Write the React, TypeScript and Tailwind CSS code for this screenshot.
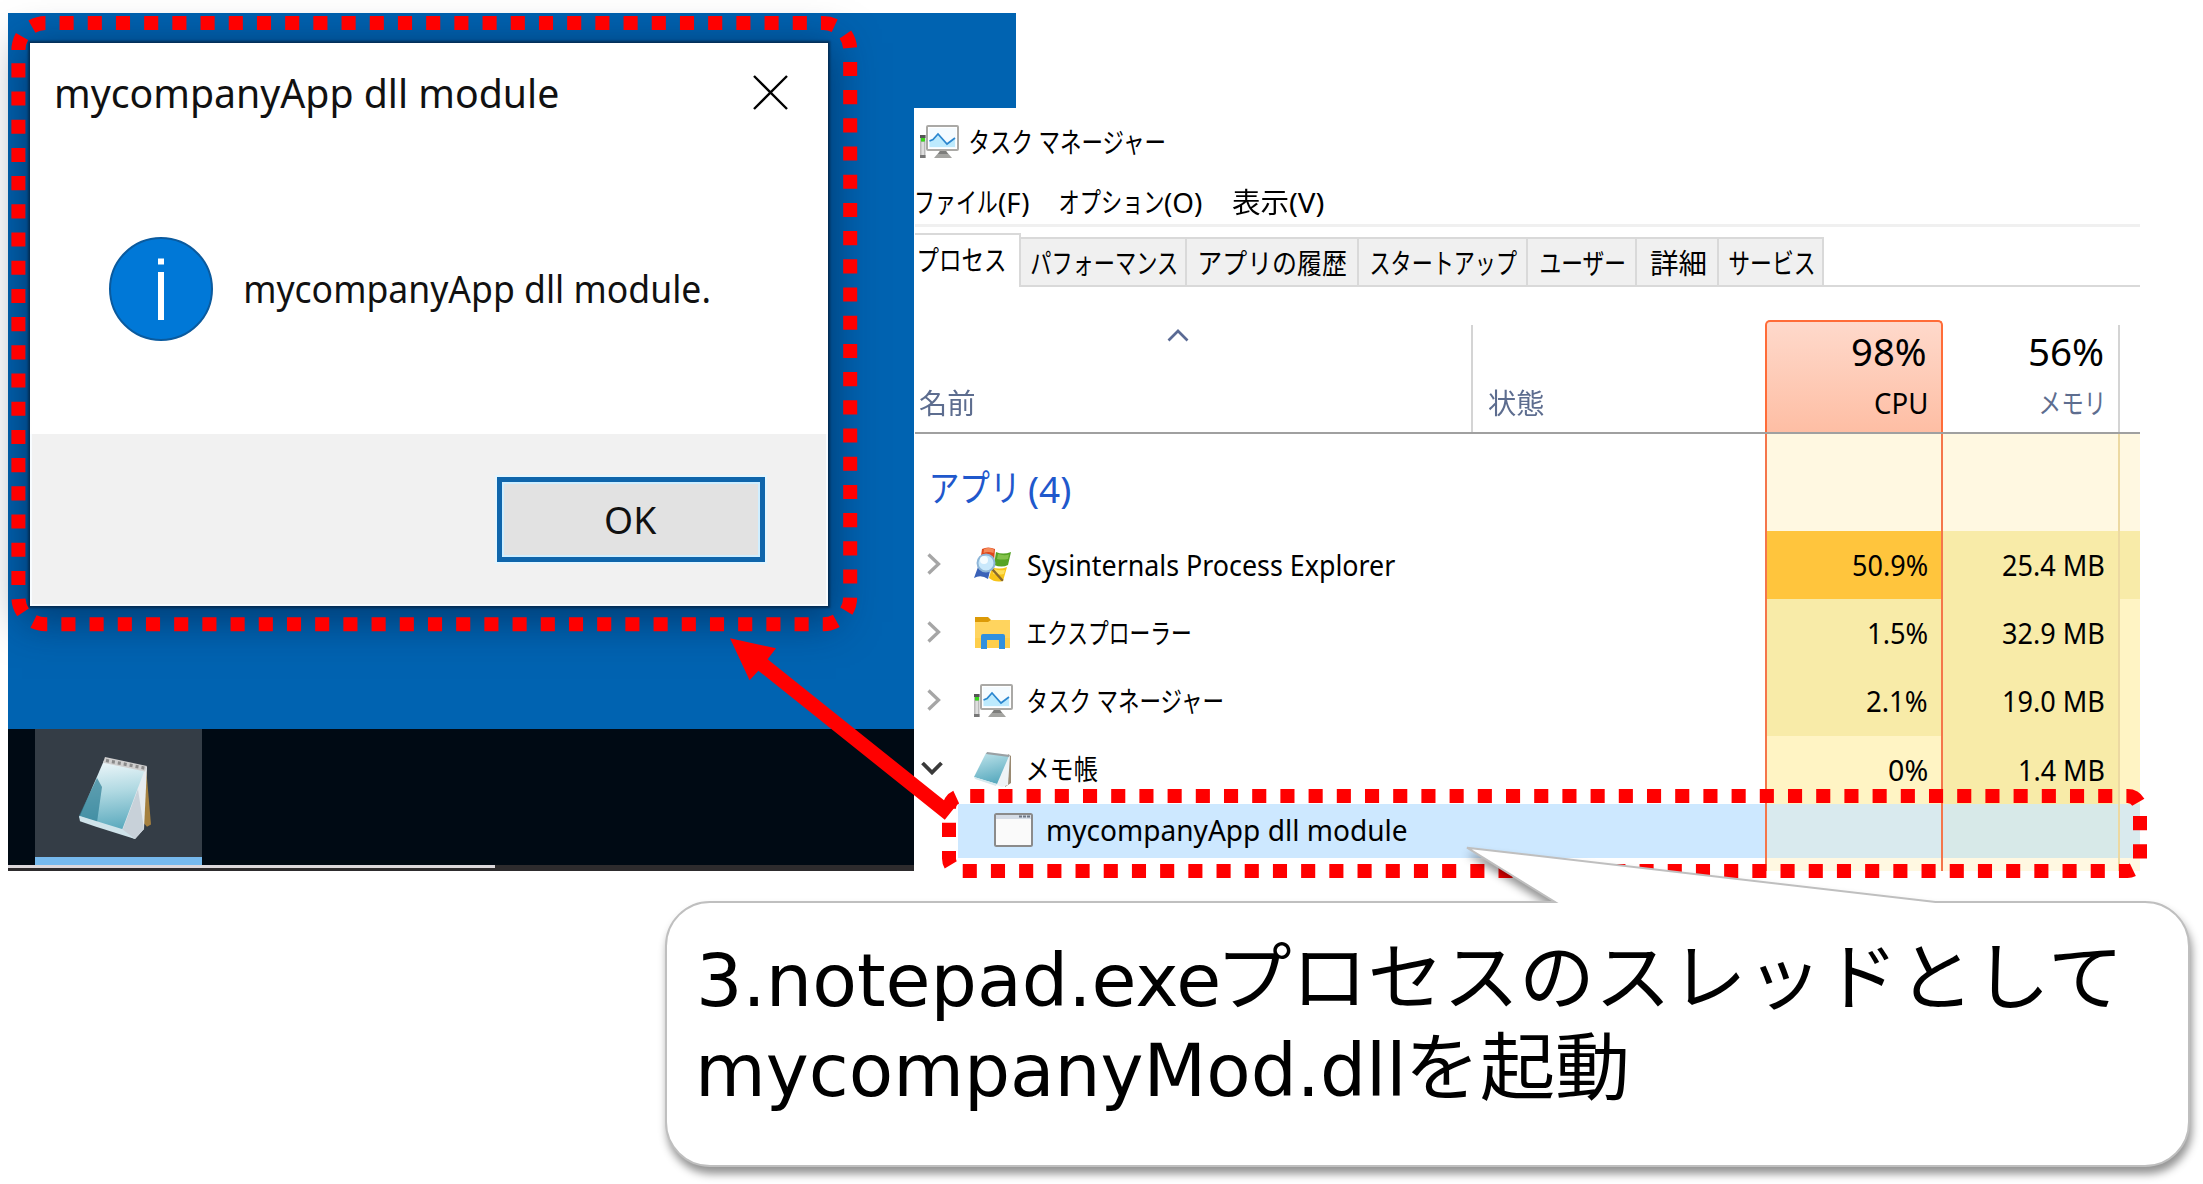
import { useLayoutEffect, useRef, useState } from "react";
import type { ReactNode } from "react";

/* One line of text whose inked width is stretched or condensed to `w` pixels. */
function Fit({ w, children, className = "" }: { w: number; children: string; className?: string }) {
  const ref = useRef<HTMLSpanElement>(null);
  const [fit, setFit] = useState({ shift: 0, scale: 1 });
  useLayoutEffect(() => {
    const el = ref.current;
    const ctx = document.createElement("canvas").getContext("2d");
    if (!el || !ctx) return;
    const cs = getComputedStyle(el);
    ctx.font = `${cs.fontWeight} ${cs.fontSize} ${cs.fontFamily}`;
    const m = ctx.measureText(children);
    const scale = w / (m.actualBoundingBoxRight + m.actualBoundingBoxLeft);
    setFit({ shift: m.actualBoundingBoxLeft * scale, scale });
  }, [w, children]);
  return (
    <span className={`block shrink-0 whitespace-nowrap ${className}`} style={{ width: w }}>
      <span
        ref={ref}
        className="inline-block origin-left"
        style={{ transform: `translateX(${fit.shift}px) scaleX(${fit.scale})` }}
      >
        {children}
      </span>
    </span>
  );
}

function TaskManagerIcon() {
  return (
    <svg width="39" height="34" viewBox="0 0 39 34" className="shrink-0">
      <rect x="0" y="10" width="5.5" height="23" fill="#b9b9b9" />
      <rect x="0" y="10" width="5.5" height="3" fill="#555" />
      <rect x="1" y="13" width="4" height="3.5" fill="#38d61c" />
      <rect x="1.5" y="17" width="2.5" height="13" fill="#dedede" />
      <rect x="0" y="30" width="5.5" height="3" fill="#777" />
      <rect x="7" y="1" width="31" height="24" rx="1" fill="#fff" stroke="#aaa9a6" strokeWidth="2" />
      <rect x="9" y="3" width="27" height="20" fill="#f4fbff" />
      <path d="M9.500 16 13 14.500 18 9 27 19 35 13V22H9.500Z" fill="#bdeafd" />
      <path d="M9.500 16 13 14.500 18 9 27 19 35 13" fill="none" stroke="#2b86cf" strokeWidth="1.700" />
      <path d="M20 26h6l6 7H14Z" fill="#a3a3a0" />
      <path d="M20 26h6l2 3h-10Z" fill="#7d7d7b" />
    </svg>
  );
}

function ProcessExplorerIcon() {
  return (
    <svg width="38" height="36" viewBox="0 0 38 36" className="shrink-0">
      <path d="M8 2Q14-1 21 2L20 15Q13 12 6 16Z" fill="#e0481b" />
      <path d="M10 2Q15 0 20 2.500L19.500 6Q14 4 9.500 6Z" fill="#f58a5a" />
      <path d="M22 5Q29 8 37 5L34 18Q28 21 20 18Z" fill="#55a324" />
      <path d="M24 7Q30 9 35 7.500L34 12Q28 13 23 12Z" fill="#83c14a" />
      <path d="M4 20Q11 16 17 20L14 32Q7 27 0 31Z" fill="#3a62b8" />
      <path d="M18 20Q25 23 33 20L29 34Q21 36 15 31Z" fill="#f7c419" />
      <path d="M20 22Q25 24 31 23L30 27Q25 28 19 27Z" fill="#ffe05a" />
      <path d="m19 23 9 10" stroke="#8a6a2a" strokeWidth="2.500" strokeLinecap="round" />
      <circle cx="12" cy="16" r="8.500" fill="#c9e8fb" stroke="#8fb6d8" strokeWidth="2" />
      <circle cx="10" cy="13" r="4" fill="#f5fcff" />
    </svg>
  );
}

function FolderIcon() {
  return (
    <svg width="38" height="34" viewBox="0 0 38 34" className="shrink-0">
      <path d="M1 1h13l3 3v4H1Z" fill="#dc9a07" />
      <path d="M1 6h13l3-2h19v28H1Z" fill="#ffd45e" />
      <path d="M1 22h35v10H1Z" fill="#fdc93f" opacity=".6" />
      <path d="M7 33V20q0-2 2-2h20q2 0 2 2v13h-6v-9H13v9Z" fill="#3190df" />
    </svg>
  );
}

/* Desktop-size notepad: lid opened over the white pages. */
function NotepadLarge() {
  return (
    <svg width="74" height="84" viewBox="0 0 74 76" className="shrink-0" preserveAspectRatio="none">
      <defs>
        <linearGradient id="pad-lg" x1=".4" y1="0" x2=".5" y2="1">
          <stop offset="0" stopColor="#eef7fa" />
          <stop offset=".45" stopColor="#b0d9e2" />
          <stop offset="1" stopColor="#5aa9bd" />
        </linearGradient>
      </defs>
      <path d="M68 10 73 62l-4 2-6-6Z" fill="#a5803f" />
      <path d="M27 2 69 10 66 66 57 75 42 69Z" fill="#e6ebef" />
      <path d="M60 30 66 66 57 75 44 68Z" fill="#c8d1d9" />
      <path d="M26 4 67 12 44 67 1 56Z" fill="url(#pad-lg)" />
      <path d="M19 20 24 28 19 60 1 54Z" fill="#2f7f95" opacity=".7" />
      <path d="M1 54 44 66l13 9-39-11-16-5Z" fill="#cfe3ea" />
      <path d="M27 1 69 9 67 14 25 6Z" fill="#cfcfcf" />
      <path d="M28 4 67 11" stroke="#8a8a8a" strokeWidth="3" strokeDasharray="3 3" />
    </svg>
  );
}

function NotepadIcon() {
  return (
    <svg width="38" height="37" viewBox="0 0 38 37" className="shrink-0">
      <defs>
        <linearGradient id="pad-sm" x1=".3" y1="0" x2=".6" y2="1">
          <stop offset="0" stopColor="#b9e0e8" />
          <stop offset="1" stopColor="#55a8bd" />
        </linearGradient>
      </defs>
      <path d="M34 3 37 5 37 32 31 36Z" fill="#9a8a72" />
      <path d="M13 1 36 4 34 34 28 36 20 33Z" fill="#eef3f6" />
      <path d="M12 2 35 5 23 33 0 26Z" fill="url(#pad-sm)" />
      <path d="M0 26 23 33 22 35 1 28Z" fill="#d6e9ee" />
      <path d="M13 1 36 4 35 6 12 3Z" fill="#9aa0a3" />
    </svg>
  );
}

function WindowIcon() {
  return (
    <svg width="39" height="34" viewBox="0 0 39 34" className="shrink-0">
      <rect x="1" y="1" width="37" height="32" rx="1.500" fill="#fafafa" stroke="#8b8b8b" strokeWidth="2" />
      <rect x="2" y="2" width="35" height="4" fill="#d5dce6" />
      <path d="M25 3.500h3m1 0h3m1 0h3" stroke="#6f7784" strokeWidth="2" />
    </svg>
  );
}

function ChevronRight() {
  return (
    <svg width="14" height="22" viewBox="0 0 14 22" className="mb-[3px] shrink-0">
      <path d="M1.500 1.500 11.500 11 1.500 20.500" fill="none" stroke="#a6a6a6" strokeWidth="3.300" />
    </svg>
  );
}

function ChevronDown() {
  return (
    <svg width="22" height="14" viewBox="0 0 22 14" className="-ml-1.5 mb-[4px] shrink-0">
      <path d="M1.500 2 11 11.500 20.500 2" fill="none" stroke="#3a3a3a" strokeWidth="3.800" />
    </svg>
  );
}

function Desktop() {
  return (
    <div className="absolute left-[8px] top-[13px] flex h-[858px] w-[1008px] flex-col overflow-hidden bg-[#0063b1]">
      <div className="flex-1" />
      <div className="flex h-[136px] bg-[#000a14] pl-[27px]">
        <div className="flex w-[167px] flex-col border-b-[8px] border-[#76b9ed] bg-[#343d46]">
          <div className="pl-[43px] pt-[27px]">
            <NotepadLarge />
          </div>
        </div>
      </div>
      <div className="h-[6px] bg-[#2d2b2d]">
        <div className="h-[3px] w-[487px] bg-[#dcd8dc]" />
      </div>
    </div>
  );
}

function MessageDialog() {
  return (
    <div className="absolute left-[30px] top-[43px] flex h-[563px] w-[798px] flex-col bg-white text-[#111] shadow-[0_0_2px_2px_rgba(5,40,75,0.85),0_8px_38px_8px_rgba(0,25,60,0.5)]">
      <div className="flex h-[100px] items-center justify-between pb-[2px] pl-[27px] pr-[40px]">
        <Fit w={501} className="pt-[2px] text-[39.5px] leading-[50px]">mycompanyApp dll module</Fit>
        <svg width="35" height="35" viewBox="0 0 35 35">
          <path d="M1 1 34 34M34 1 1 34" stroke="#000" strokeWidth="2.400" />
        </svg>
      </div>
      <div className="flex h-[291px] items-center gap-[33px] pl-[79px]">
        <svg width="104" height="104" viewBox="0 0 104 104">
          <circle cx="52" cy="52" r="51" fill="#0078d7" stroke="#0a5a9e" strokeWidth="2" />
          <rect x="49" y="21.500" width="6" height="6" fill="#fff" />
          <rect x="49" y="35" width="6" height="48" fill="#fff" />
        </svg>
        <Fit w={463} className="text-[37.5px] leading-[50px]">mycompanyApp dll module.</Fit>
      </div>
      <div className="flex flex-1 items-center justify-end border-2 border-t-0 border-[#f8fcff] bg-[#f1f1f1] pr-[61px]">
        <div className="flex h-[85px] w-[268px] items-center justify-center border-[5px] border-[#0f65ab] bg-[#e2e2e2] pt-[2px] shadow-[0_0_0_2px_#e4f6ff,inset_0_0_0_2px_#cfeeff]">
          <Fit w={51} className="text-[37.5px] leading-[50px]">OK</Fit>
        </div>
      </div>
    </div>
  );
}

function Tab({ w, width, label }: { w: string; width: number; label: string }) {
  return (
    <div className={`flex h-[50px] items-center justify-center border-y-2 border-r-2 border-[#d9d9d9] bg-[#f0f0f0] pl-[2px] pt-0.5 ${w}`}>
      <Fit w={width}>{label}</Fit>
    </div>
  );
}

type Row = { icon: ReactNode; name: string; nameW: number; cpu: string; cpuW: number; cpuBg: string; mem: string; memW: number; restBg: string; open?: boolean };

const rows: Row[] = [
  { icon: <ProcessExplorerIcon />, name: "Sysinternals Process Explorer", nameW: 367.5, cpu: "50.9%", cpuW: 74.5, cpuBg: "bg-[#ffc53d]", mem: "25.4 MB", memW: 100.5, restBg: "bg-[#f8eba8]" },
  { icon: <FolderIcon />, name: "エクスプローラー", nameW: 162.5, cpu: "1.5%", cpuW: 58.5, cpuBg: "bg-[#f8eba8]", mem: "32.9 MB", memW: 100.5, restBg: "bg-[#fff4c4]" },
  { icon: <TaskManagerIcon />, name: "タスク マネージャー", nameW: 195.5, cpu: "2.1%", cpuW: 60, cpuBg: "bg-[#f8eba8]", mem: "19.0 MB", memW: 99.5, restBg: "bg-[#fff4c4]" },
  { icon: <NotepadIcon />, name: "メモ帳", nameW: 69.5, cpu: "0%", cpuW: 38.5, cpuBg: "bg-[#fff4c4]", mem: "1.4 MB", memW: 83.5, restBg: "bg-[#fff4c4]", open: true },
];

function Cells({ cpuBg, memBg, restBg, cpu, mem }: { cpuBg: string; memBg: string; restBg: string; cpu?: ReactNode; mem?: ReactNode }) {
  return (
    <>
      <div className={`flex w-[178px] items-center justify-end border-x-2 border-[#f5764a] pr-[14px] ${cpuBg}`}>{cpu}</div>
      <div className={`flex w-[177px] items-center justify-end border-r-2 border-[#ecd9a2] pr-[15px] ${memBg}`}>{mem}</div>
      <div className={`w-[20px] ${restBg}`} />
    </>
  );
}

function TaskManager() {
  return (
    <div className="absolute left-[914px] top-[108px] flex h-[763px] w-[1226px] flex-col overflow-hidden bg-white pl-px text-[28px] leading-[40px] text-black">
      <div className="flex h-[68px] shrink-0 items-center gap-[11px] pl-[5px]">
        <TaskManagerIcon />
        <Fit w={196}>タスク マネージャー</Fit>
      </div>
      <div className="flex h-[51px] shrink-0 items-center gap-[31px] border-b-[3px] border-[#f0f0f0] pl-[2px] pt-1">
        <div className="flex gap-[2px]"><Fit w={80}>ファイル</Fit><Fit w={30}>(F)</Fit></div>
        <div className="flex gap-[2px]"><Fit w={103}>オプション</Fit><Fit w={37}>(O)</Fit></div>
        <div className="-ml-px flex gap-[2px]"><Fit w={56}>表示</Fit><Fit w={34}>(V)</Fit></div>
      </div>
      <div className="flex h-[60px] shrink-0 items-end">
        <div className="flex h-[54px] w-[106px] items-center border-r-2 border-t-2 border-[#d9d9d9] bg-white pb-[2px] pl-[4px]">
          <Fit w={86}>プロセス</Fit>
        </div>
        <Tab w="w-[166px]" width={146} label="パフォーマンス" />
        <Tab w="w-[172px]" width={146} label="アプリの履歴" />
        <Tab w="w-[169px]" width={146} label="スタートアップ" />
        <Tab w="w-[109px]" width={84} label="ユーザー" />
        <Tab w="w-[82px]" width={55} label="詳細" />
        <Tab w="w-[105px]" width={85} label="サービス" />
        <div className="flex-1 self-stretch border-b-2 border-[#d9d9d9]" />
      </div>
      <div className="flex h-[147px] shrink-0 items-end border-b-2 border-[#a0a0a0] text-[#5d6d8f]">
        <div className="flex h-[107px] w-[558px] flex-col border-r-2 border-[#d4d4d4] pl-[4px]">
          <svg width="22" height="13" viewBox="0 0 22 13" className="ml-[248px] mt-[4px]">
            <path d="M1.500 11.500 11 2 20.500 11.500" fill="none" stroke="#5a6a94" strokeWidth="2.700" />
          </svg>
          <Fit w={55.5} className="mt-[41px]">名前</Fit>
        </div>
        <div className="flex h-[107px] w-[292px] items-start pl-[15px] pt-[58px]">
          <Fit w={55.5}>状態</Fit>
        </div>
        <div className="flex h-[112px] w-[178px] flex-col items-end rounded-t-[5px] border-2 border-b-0 border-[#ff6c38] bg-linear-to-b from-[#fed9cb] to-[#febea4] pr-[15px] pt-[9px] text-black">
          <Fit w={73} className="mr-px text-[38px]">98%</Fit>
          <Fit w={51.5} className="mt-[12px] text-[28.5px]">CPU</Fit>
        </div>
        <div className="flex h-[107px] w-[177px] flex-col items-end border-r-2 border-[#d4d4d4] pr-[16px] pt-[6px]">
          <Fit w={72.5} className="text-[38px] text-black">56%</Fit>
          <Fit w={60.5} className="mr-px mt-[12px]">メモリ</Fit>
        </div>
      </div>
      <div className="flex h-[97px] shrink-0">
        <div className="flex w-[850px] items-center gap-[15px] pl-[17px] pt-[14px] text-[36px] text-[#1f58cc]">
          <Fit w={82} className="mb-[3px] text-[37px]">アプリ</Fit>
          <Fit w={41.5}>(4)</Fit>
        </div>
        <Cells cpuBg="bg-[#fff8e1]" memBg="bg-[#fff8e1]" restBg="bg-[#fff8e1]" />
      </div>
      {rows.map((r) => (
        <div key={r.name} className="flex h-[68.2px] shrink-0 text-[28.5px]">
          <div className="flex w-[850px] items-center">
            <div className="flex w-[59px] items-center pl-[12px]">{r.open ? <ChevronDown /> : <ChevronRight />}</div>
            <div className="flex w-[54px] items-center">{r.icon}</div>
            <Fit w={r.nameW} className="mb-px">{r.name}</Fit>
          </div>
          <Cells
            cpuBg={r.cpuBg}
            memBg="bg-[#f8eba8]"
            restBg={r.restBg}
            cpu={<Fit w={r.cpuW}>{r.cpu}</Fit>}
            mem={<Fit w={r.memW}>{r.mem}</Fit>}
          />
        </div>
      ))}
      <div className="flex h-[54px] shrink-0 pl-[43px] text-[28.5px]">
        <div className="flex w-[807px] items-center gap-[15px] bg-[#cde8ff] pb-[2px] pl-[36px]">
          <WindowIcon />
          <Fit w={358.5}>mycompanyApp dll module</Fit>
        </div>
        <Cells cpuBg="bg-[#d9eaee]" memBg="bg-[#d7e9e8]" restBg="bg-[#d9eaee]" />
      </div>
      <div className="flex flex-1 pl-[850px]">
        <Cells cpuBg="bg-[#fff8e1]" memBg="bg-[#fff8e1]" restBg="bg-[#fff8e1]" />
      </div>
    </div>
  );
}

/* Dotted highlight frames and the arrow that joins them. */
function Annotations() {
  return (
    <svg className="absolute left-0 top-0" width="2203" height="1184" viewBox="0 0 2203 1184">
      <g fill="none" stroke="#f00" strokeWidth="14" strokeDasharray="14.100 14.100">
        <path d="M18.400 50A27 27 0 0 1 45.400 23H823.200A27 27 0 0 1 850.200 50V597.300A27 27 0 0 1 823.200 624.300H45.400A27 27 0 0 1 18.400 597.300Z" />
        <path d="M949 808.500A12.500 12.500 0 0 1 961.500 796H2127.500A12.500 12.500 0 0 1 2140 808.500V858.500A12.500 12.500 0 0 1 2127.500 871H961.500A12.500 12.500 0 0 1 949 858.500Z" />
      </g>
      <path d="M730 638.300 776 648.300 767.600 659.300 954 808.300 944.800 819.700 758.400 670.700 749.600 680.300Z" fill="#f00" />
    </svg>
  );
}

function Callout() {
  return (
    <div className="absolute left-[666px] top-[902px] h-[264px] w-[1523px]">
      <svg className="absolute left-0 top-0 overflow-visible drop-shadow-[2px_7px_4px_rgba(0,0,0,0.42)]" width="1523" height="264" viewBox="0 0 1523 264">
        <path
          d="M0 44A44 44 0 0 1 44 0H889L801 -54.300 1269.500 0H1479A44 44 0 0 1 1523 44V220A44 44 0 0 1 1479 264H44A44 44 0 0 1 0 220Z"
          fill="#fff"
          stroke="#bfbfbf"
          strokeWidth="2"
        />
      </svg>
      <div className="relative flex flex-col pl-[35px] pt-[34px] font-['DejaVu_Sans','Noto_Sans_CJK_JP',sans-serif] text-[73.5px] leading-[90px] text-black">
        <div className="flex gap-[7px]">
          <Fit w={517}>3.notepad.exe</Fit>
          <Fit w={892} className="-mt-[2px]">プロセスのスレッドとして</Fit>
        </div>
        <div className="flex gap-[11px]">
          <Fit w={699}>mycompanyMod.dll</Fit>
          <Fit w={214.5} className="-mt-[2px]">を起動</Fit>
        </div>
      </div>
    </div>
  );
}

export default function App() {
  return (
    <div lang="ja" className="relative h-[1184px] w-[2203px] overflow-hidden bg-white font-['Noto_Sans','Noto_Sans_CJK_JP',sans-serif]">
      <Desktop />
      <MessageDialog />
      <TaskManager />
      <Annotations />
      <Callout />
    </div>
  );
}
